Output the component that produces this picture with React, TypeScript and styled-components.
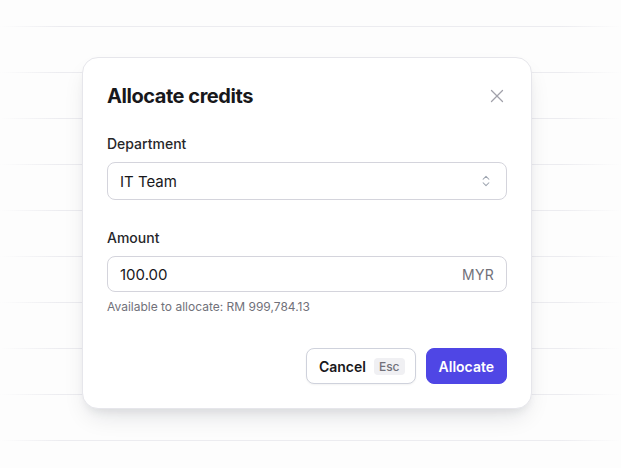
import styled, { createGlobalStyle } from "styled-components";
import { X, ChevronsUpDown } from "lucide-react";

const GlobalStyle = createGlobalStyle`
  html, body {
    margin: 0;
    padding: 0;
    background: #fdfdfd;
  }
  body {
    font-family: Inter, "Noto Sans", sans-serif;
    -webkit-font-smoothing: antialiased;
  }
`;

const Page = styled.div`
  position: relative;
  width: 621px;
  height: 468px;
  overflow: hidden;
  background: #fdfdfd;
`;

const Backdrop = styled.div`
  display: flex;
  flex-direction: column;
  gap: 45px;
  padding-top: 26px;
`;

const Rule = styled.div`
  height: 1px;
  background: linear-gradient(
    to right,
    rgba(228, 228, 234, 0) 0px,
    #ececf0 60px,
    #ececf0 561px,
    rgba(228, 228, 234, 0) 621px
  );
`;

const Overlay = styled.div`
  position: absolute;
  inset: 0;
  padding: 57px 0 0 82px;
`;

const Dialog = styled.div`
  box-sizing: border-box;
  width: 450px;
  background: #ffffff;
  border: 1px solid #e6e6eb;
  border-radius: 16px;
  padding: 24px;
  box-shadow: 0 12px 24px -6px rgba(17, 24, 39, 0.12),
    0 6px 10px -4px rgba(17, 24, 39, 0.08);
  display: flex;
  flex-direction: column;
`;

const Header = styled.div`
  display: flex;
  align-items: center;
  justify-content: space-between;
  height: 28px;
`;

const Title = styled.h2`
  margin: 0;
  font-size: 20px;
  line-height: 28px;
  font-weight: 700;
  color: #18181b;
  letter-spacing: -0.45px;
`;

const CloseButton = styled.button`
  display: flex;
  align-items: center;
  justify-content: center;
  border: 0;
  background: none;
  padding: 0;
  margin-right: -1px;
  color: #a1a1aa;
  cursor: pointer;
`;

const Field = styled.div<{ $top: number }>`
  display: flex;
  flex-direction: column;
  margin-top: ${(p) => p.$top}px;
`;

const Label = styled.label`
  font-size: 14px;
  line-height: 20px;
  font-weight: 500;
  color: #27272a;
  margin-bottom: 8px;
`;

const Control = styled.div<{ $height: number }>`
  box-sizing: border-box;
  height: ${(p) => p.$height}px;
  display: flex;
  align-items: center;
  justify-content: space-between;
  padding: 0 12px;
  border: 1px solid #d4d4dc;
  border-radius: 8px;
  background: #ffffff;
  font-size: 15px;
  color: #18181b;
`;

const Suffix = styled.span`
  font-size: 14px;
  color: #71717a;
  letter-spacing: 0.3px;
`;

const Chevron = styled.span`
  display: flex;
  color: #9ca3af;
  margin-right: 1px;
`;

const Hint = styled.p`
  margin: 7px 0 0;
  font-size: 12px;
  line-height: 16px;
  color: #71717a;
`;

const Footer = styled.div`
  display: flex;
  justify-content: flex-end;
  gap: 10px;
  margin-top: 33px;
`;

const Button = styled.button<{ $primary?: boolean }>`
  box-sizing: border-box;
  height: 36px;
  display: flex;
  align-items: center;
  gap: 8px;
  padding: ${(p) => (p.$primary ? "0 12px" : "0 10px 0 12px")};
  border-radius: 8px;
  border: 1px solid ${(p) => (p.$primary ? "#4f46e5" : "#cfd2dc")};
  background: ${(p) => (p.$primary ? "#4f46e5" : "#ffffff")};
  color: ${(p) => (p.$primary ? "#ffffff" : "#18181b")};
  font-family: inherit;
  font-size: 14px;
  font-weight: 600;
  box-shadow: ${(p) => (p.$primary ? "none" : "0 1px 2px rgba(0,0,0,0.05)")};
  cursor: pointer;
`;

const Kbd = styled.kbd`
  font-family: inherit;
  font-size: 12px;
  font-weight: 500;
  line-height: 17px;
  padding: 0 5px;
  border-radius: 4px;
  background: #f0f0f3;
  color: #71717a;
`;

const App = () => {
  const rules = Array.from({ length: 10 });
  return (
    <>
      <GlobalStyle />
      <Page>
        <Backdrop>
          {rules.map((_, i) => (
            <Rule key={i} />
          ))}
        </Backdrop>
        <Overlay>
          <Dialog>
            <Header>
              <Title>Allocate credits</Title>
              <CloseButton aria-label="Close">
                <X size={22} strokeWidth={1.4} />
              </CloseButton>
            </Header>
            <Field $top={24}>
              <Label>Department</Label>
              <Control $height={38}>
                <span>IT Team</span>
                <Chevron>
                  <ChevronsUpDown size={14} strokeWidth={1.8} />
                </Chevron>
              </Control>
            </Field>
            <Field $top={28}>
              <Label>Amount</Label>
              <Control $height={36}>
                <span>100.00</span>
                <Suffix>MYR</Suffix>
              </Control>
              <Hint>Available to allocate: RM 999,784.13</Hint>
            </Field>
            <Footer>
              <Button>
                Cancel
                <Kbd>Esc</Kbd>
              </Button>
              <Button $primary>Allocate</Button>
            </Footer>
          </Dialog>
        </Overlay>
      </Page>
    </>
  );
};

export default App;
